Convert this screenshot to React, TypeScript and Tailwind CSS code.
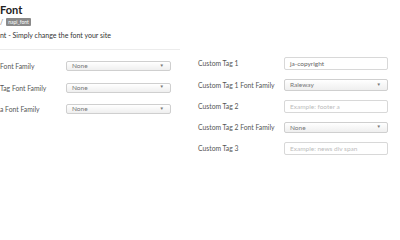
function Caret() {
  return <span className="text-[4.5px] leading-none text-[#777]">▼</span>;
}

function SelectBox({ value, className }: { value: string; className: string }) {
  return (
    <div
      className={`flex items-center justify-between rounded-[2px] border border-[#cfcfcf] bg-gradient-to-b from-white to-[#efefef] pl-[5px] pr-[6px] text-[6.5px] text-[#777] ${className}`}
    >
      <span>{value}</span>
      <Caret />
    </div>
  );
}

function TextInput({ value, placeholder }: { value?: string; placeholder?: string }) {
  return (
    <div className="flex h-[13px] w-[104px] items-center rounded-[2px] border border-[#d8d8d8] bg-white px-[5px] text-[6.5px]">
      {value ? (
        <span className="text-[#666]">{value}</span>
      ) : (
        <span className="text-[#bdbdbd]">{placeholder}</span>
      )}
    </div>
  );
}

const leftRows = ['Font Family', 'Tag Font Family', 'a Font Family'];

export default function App() {
  return (
    <div
      className="h-[200px] w-[400px] overflow-hidden bg-white text-[#555]"
      style={{ fontFamily: 'Lato, "Open Sans", sans-serif' }}
    >
      <div className="w-[180px] pt-[4px]">
        <h1 className="text-[11px] font-bold leading-[11px] text-[#222]">Font</h1>
        <div className="mt-[3px] flex h-[8px] items-center gap-[3px] text-[7px] leading-[8px] text-[#777]">
          <span>/</span>
          <span className="rounded-[1px] bg-[#8a8a8a] px-[2px] text-[5px] leading-[8px] text-white">
            napi_font
          </span>
        </div>
        <p className="mt-[5px] text-[7px] leading-[9px] text-[#333]">
          nt - Simply change the font your site
        </p>
        <div className="mt-[9px] border-t border-[#ececec]" />
      </div>

      <div className="flex">
        <div className="flex w-[198px] flex-col gap-[11.5px] pt-[11px]">
          {leftRows.map((label) => (
            <div key={label} className="flex items-center">
              <span className="w-[66px] whitespace-nowrap text-[6.8px] leading-[10px] text-[#555]">
                {label}
              </span>
              <SelectBox value="None" className="h-[10px] w-[105px]" />
            </div>
          ))}
        </div>

        <div className="flex flex-col gap-[9px] pt-[7px] text-[6.8px] text-[#555]">
          <div className="flex items-center">
            <span className="w-[86px]">Custom Tag 1</span>
            <TextInput value="ja-copyright" />
          </div>
          <div className="flex items-center">
            <span className="w-[86px]">Custom Tag 1 Font Family</span>
            <SelectBox value="Raleway" className="h-[12px] w-[104px]" />
          </div>
          <div className="flex items-center">
            <span className="w-[86px]">Custom Tag 2</span>
            <TextInput placeholder="Example: footer a" />
          </div>
          <div className="flex items-center">
            <span className="w-[86px]">Custom Tag 2 Font Family</span>
            <SelectBox value="None" className="h-[11px] w-[104px]" />
          </div>
          <div className="flex items-center">
            <span className="w-[86px]">Custom Tag 3</span>
            <TextInput placeholder="Example: news div span" />
          </div>
        </div>
      </div>
    </div>
  );
}
